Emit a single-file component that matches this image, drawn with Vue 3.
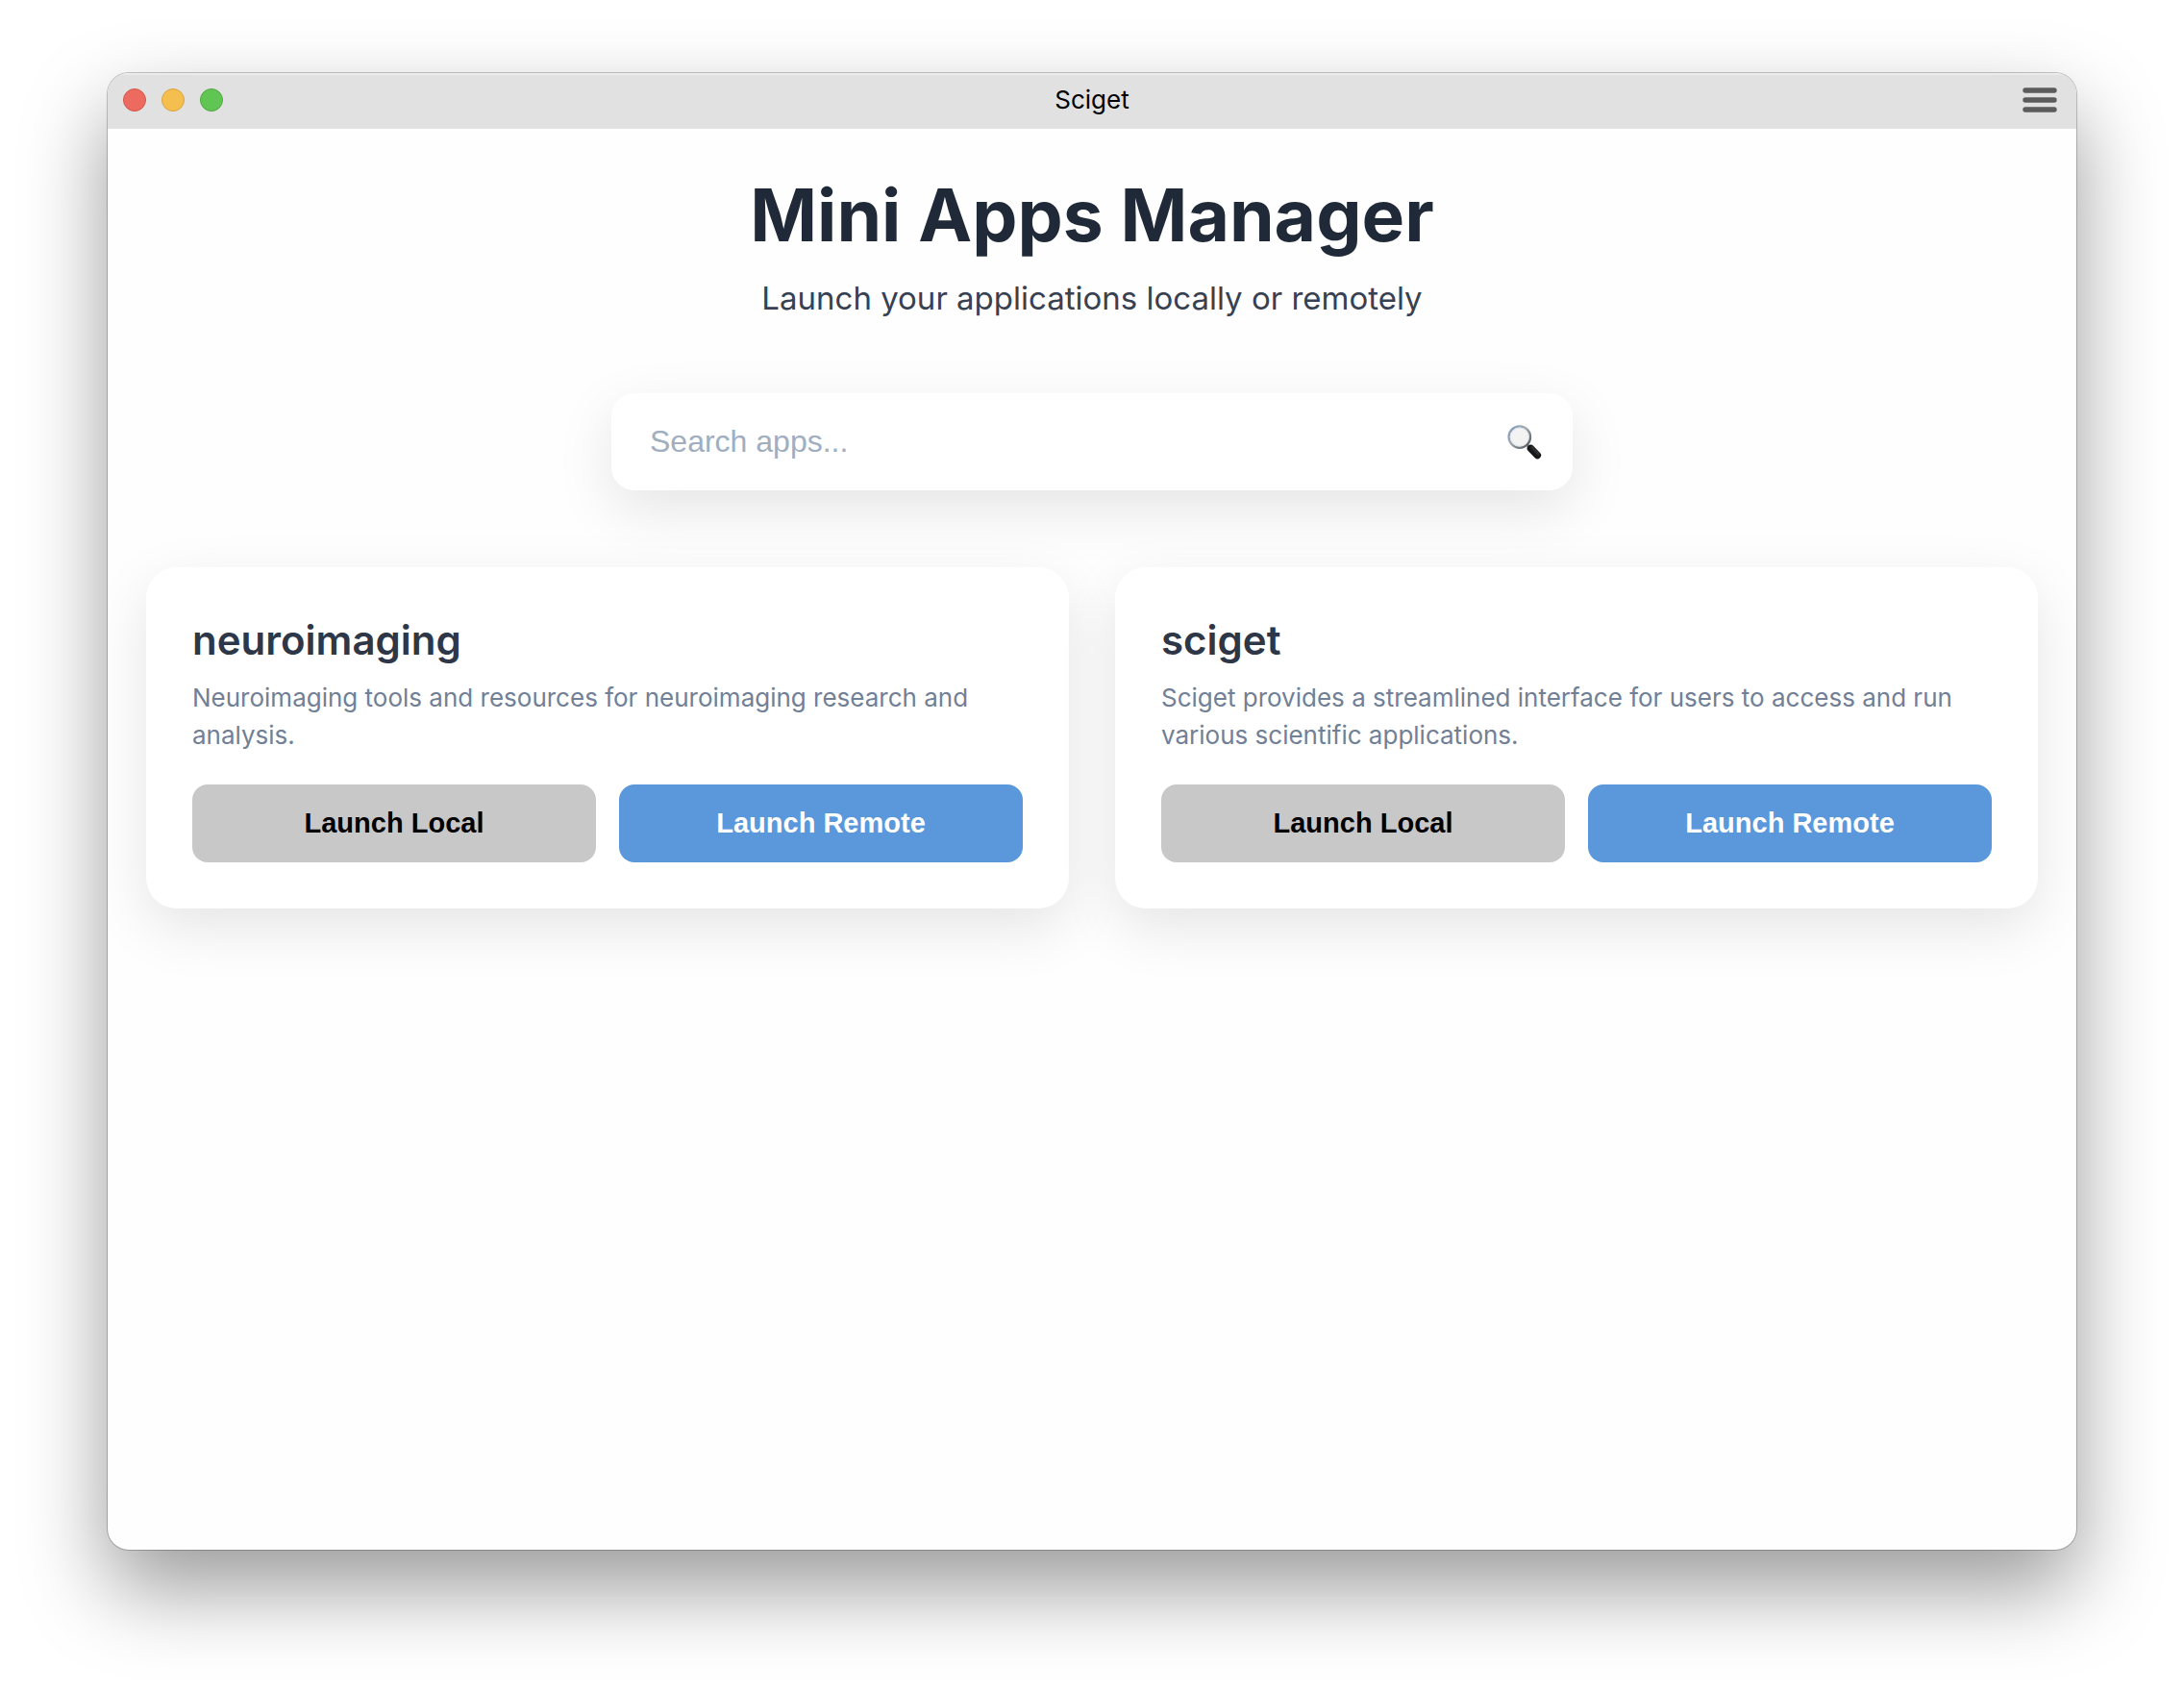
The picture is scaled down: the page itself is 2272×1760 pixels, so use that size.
<script setup>
import { computed, ref } from 'vue'

const query = ref('')

const apps = [
  {
    name: 'neuroimaging',
    description: 'Neuroimaging tools and resources for neuroimaging research and analysis.',
  },
  {
    name: 'sciget',
    description:
      'Sciget provides a streamlined interface for users to access and run various scientific applications.',
  },
]

const visibleApps = computed(() =>
  apps.filter((app) => app.name.includes(query.value.trim().toLowerCase())),
)
</script>

<template>
  <div class="desktop">
    <div class="window">
      <header class="titlebar">
        <div class="lights">
          <button class="light close" type="button" aria-label="Close"></button>
          <button class="light minimize" type="button" aria-label="Minimize"></button>
          <button class="light zoom" type="button" aria-label="Zoom"></button>
        </div>
        <span class="window-title">Sciget</span>
        <button class="menu" type="button" aria-label="Menu">
          <svg width="36" height="26" viewBox="0 0 36 26" aria-hidden="true">
            <path d="M3 3H33M3 13H33M3 23H33" stroke="#5b5b5b" stroke-width="5.4" stroke-linecap="round" />
          </svg>
        </button>
      </header>

      <main class="content">
        <div class="intro">
          <h1>Mini Apps Manager</h1>
          <p>Launch your applications locally or remotely</p>
        </div>

        <label class="search">
          <input v-model="query" type="text" placeholder="Search apps..." aria-label="Search apps" />
          <svg class="glass" width="36" height="36" viewBox="0 0 36 36" aria-hidden="true">
            <defs>
              <linearGradient id="rim" x1="0" y1="0" x2="1" y2="1">
                <stop offset="0" stop-color="#7fa0c4" />
                <stop offset="0.45" stop-color="#a3a8ae" />
                <stop offset="1" stop-color="#4c5156" />
              </linearGradient>
              <linearGradient id="grip" x1="0" y1="1" x2="1" y2="0">
                <stop offset="0" stop-color="#0c0d0e" />
                <stop offset="0.55" stop-color="#2b2d30" />
                <stop offset="1" stop-color="#5a5d61" />
              </linearGradient>
            </defs>
            <path d="M20.5 20.5 24 24" stroke="#777c81" stroke-width="3" />
            <path d="M24.4 24.4 31.4 31.6" stroke="#151617" stroke-width="7.4" stroke-linecap="round" />
            <path d="M25.4 23.6 32 30.4" stroke="url(#grip)" stroke-width="3" stroke-linecap="round" />
            <circle cx="12.8" cy="12.6" r="11.2" fill="#f3f3f4" stroke="url(#rim)" stroke-width="2.4" />
            <circle cx="12.8" cy="12.6" r="9.6" fill="none" stroke="#dde2e8" stroke-width="1" />
          </svg>
        </label>

        <section class="grid" aria-label="Apps">
          <article v-for="app in visibleApps" :key="app.name" class="card">
            <h2>{{ app.name }}</h2>
            <p>{{ app.description }}</p>
            <div class="actions">
              <button class="launch local" type="button">Launch Local</button>
              <button class="launch remote" type="button">Launch Remote</button>
            </div>
          </article>
        </section>
      </main>
    </div>
  </div>
</template>

<style>
body {
  margin: 0;
  background: #ffffff;
}
</style>

<style scoped>
.desktop {
  box-sizing: border-box;
  display: flex;
  min-height: 100vh;
  padding: 76px 112px 148px;
  overflow: hidden;
  font-family: Inter, "Liberation Sans", sans-serif;
}

.window {
  flex: 1;
  min-width: 0;
  overflow: hidden;
  border-radius: 22px;
  background: #fefefe;
  box-shadow:
    0 0 0 1px rgba(0, 0, 0, 0.22),
    0 40px 88px rgba(0, 0, 0, 0.4);
}

.titlebar {
  display: grid;
  grid-template-columns: 1fr auto 1fr;
  align-items: center;
  box-sizing: border-box;
  height: 58px;
  padding: 0 16px 2px;
  background: #e1e1e1;
  box-shadow: inset 0 2px 0 #ebebeb;
}

.lights {
  display: flex;
  gap: 16px;
}

.light {
  width: 24px;
  height: 24px;
  padding: 0;
  border: 1px solid;
  border-radius: 50%;
}

.close {
  border-color: #d2564b;
  background: #ec6a5e;
}

.minimize {
  border-color: #d9a23e;
  background: #f4bf4f;
}

.zoom {
  border-color: #4ea73f;
  background: #61c554;
}

.window-title {
  font-size: 26px;
  line-height: 34px;
  color: #000000;
}

.menu {
  display: flex;
  justify-self: end;
  padding: 0 4px;
  border: 0;
  background: none;
}

.content {
  padding: 40px;
}

.intro {
  text-align: center;
}

h1,
h2,
p {
  margin: 0;
}

h1 {
  font-size: 75px;
  font-weight: 700;
  line-height: 100px;
  color: #1f2937;
}

.intro p {
  margin-top: 14px;
  font-size: 33px;
  line-height: 44px;
  color: #374151;
}

.search {
  display: flex;
  align-items: center;
  box-sizing: border-box;
  max-width: 1000px;
  height: 101px;
  margin: 77px auto 80px;
  padding: 0 32px 0 40px;
  border-radius: 24px;
  background: #ffffff;
  box-shadow: 0 20px 60px rgba(0, 0, 0, 0.1);
}

.search input {
  flex: 1;
  min-width: 0;
  padding: 0;
  border: 0;
  outline: 0;
  background: none;
  font-family: "Liberation Sans", sans-serif;
  font-size: 32px;
  color: #2d3748;
}

.search input::placeholder {
  color: #a0aec0;
}

.grid {
  display: grid;
  grid-template-columns: repeat(2, minmax(0, 1fr));
  gap: 48px;
}

.card {
  padding: 48px;
  border-radius: 32px;
  background: #ffffff;
  box-shadow: 0 20px 60px rgba(0, 0, 0, 0.1);
}

h2 {
  font-size: 42px;
  font-weight: 600;
  line-height: 56px;
  color: #2d3748;
}

.card p {
  margin-top: 12px;
  font-size: 26px;
  line-height: 39px;
  color: #718096;
}

.actions {
  display: flex;
  gap: 24px;
  margin-top: 32px;
}

.launch {
  flex: 1;
  height: 81px;
  padding: 0;
  border: 0;
  border-radius: 16px;
  font-family: "Liberation Sans", sans-serif;
  font-size: 29px;
  font-weight: 700;
}

.local {
  background: #c8c8c8;
  color: #000000;
}

.remote {
  background: #5a97db;
  color: #ffffff;
}
</style>
